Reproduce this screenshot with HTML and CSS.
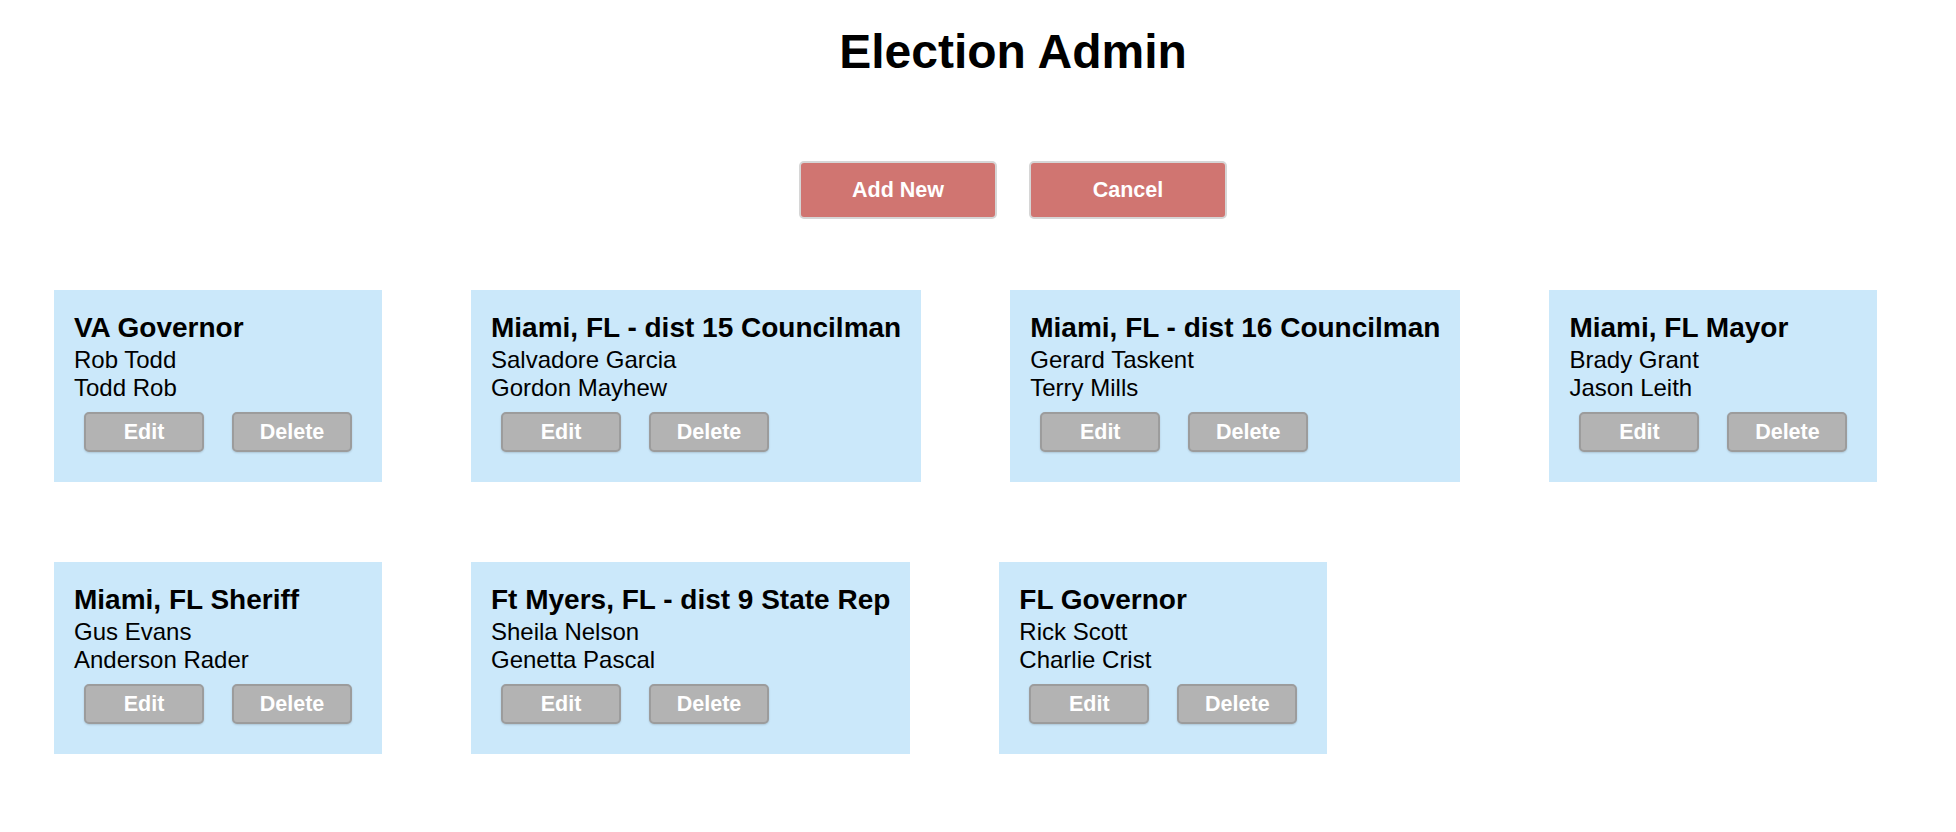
FILE: index.html
```html
<!DOCTYPE html>
<html lang="en">
<head>
<meta charset="utf-8">
<title>Election Admin</title>
<link rel="stylesheet" href="styles.css">
</head>
<body>
  <header class="header">
    <h1 class="title">Election Admin</h1>
    <div class="actions">
      <button class="btn-primary">Add New</button>
      <button class="btn-primary">Cancel</button>
    </div>
  </header>
  <main class="cards">
    <div class="card">
      <h3 class="card-title">VA Governor</h3>
      <div class="candidate">Rob Todd</div>
      <div class="candidate">Todd Rob</div>
      <div class="card-actions"><button class="btn-small">Edit</button><button class="btn-small">Delete</button></div>
    </div>
    <div class="card">
      <h3 class="card-title">Miami, FL - dist 15 Councilman</h3>
      <div class="candidate">Salvadore Garcia</div>
      <div class="candidate">Gordon Mayhew</div>
      <div class="card-actions"><button class="btn-small">Edit</button><button class="btn-small">Delete</button></div>
    </div>
    <div class="card">
      <h3 class="card-title">Miami, FL - dist 16 Councilman</h3>
      <div class="candidate">Gerard Taskent</div>
      <div class="candidate">Terry Mills</div>
      <div class="card-actions"><button class="btn-small">Edit</button><button class="btn-small">Delete</button></div>
    </div>
    <div class="card">
      <h3 class="card-title">Miami, FL Mayor</h3>
      <div class="candidate">Brady Grant</div>
      <div class="candidate">Jason Leith</div>
      <div class="card-actions"><button class="btn-small">Edit</button><button class="btn-small">Delete</button></div>
    </div>
    <div class="card">
      <h3 class="card-title">Miami, FL Sheriff</h3>
      <div class="candidate">Gus Evans</div>
      <div class="candidate">Anderson Rader</div>
      <div class="card-actions"><button class="btn-small">Edit</button><button class="btn-small">Delete</button></div>
    </div>
    <div class="card">
      <h3 class="card-title">Ft Myers, FL - dist 9 State Rep</h3>
      <div class="candidate">Sheila Nelson</div>
      <div class="candidate">Genetta Pascal</div>
      <div class="card-actions"><button class="btn-small">Edit</button><button class="btn-small">Delete</button></div>
    </div>
    <div class="card">
      <h3 class="card-title">FL Governor</h3>
      <div class="candidate">Rick Scott</div>
      <div class="candidate">Charlie Crist</div>
      <div class="card-actions"><button class="btn-small">Edit</button><button class="btn-small">Delete</button></div>
    </div>
  </main>
</body>
</html>
```

FILE: styles.css
```css
html, body {
  margin: 0;
  padding: 0;
  background: #ffffff;
  font-family: "Liberation Sans", Arial, Helvetica, sans-serif;
  color: #000;
}

.header {
  padding: 0 0 0 70px;
  display: flex;
  flex-direction: column;
  align-items: center;
}

.title {
  margin: 24px 0 0;
  font-size: 48px;
  font-weight: bold;
  line-height: 55px;
}

.actions {
  margin-top: 82px;
  display: flex;
  gap: 32px;
}

.btn-primary {
  width: 198px;
  height: 58px;
  background: #d07571;
  color: #fff;
  border: 2px solid #d6d6d6;
  border-radius: 5px;
  font-family: "Liberation Sans", Arial, sans-serif;
  font-weight: bold;
  font-size: 21.5px;
  padding: 0;
}

.cards {
  margin-top: 71px;
  padding: 0 40px 0 54px;
  display: flex;
  flex-wrap: wrap;
  column-gap: 89px;
  row-gap: 80px;
  align-items: flex-start;
}

.card {
  background: #cbe8fa;
  min-width: 288px;
  padding: 22px 20px 20px;
}

.card-title {
  margin: 0 0 2px;
  font-size: 28px;
  font-weight: bold;
  line-height: 32px;
  white-space: nowrap;
}

.candidate {
  font-size: 24px;
  line-height: 28px;
}

.card-actions {
  display: flex;
  gap: 28px;
  margin: 10px 0 10px 10px;
}

.btn-small {
  width: 120px;
  height: 40px;
  background: #b3b3b3;
  color: #fff;
  border: 2px solid #9c9c9c;
  border-radius: 5px;
  font-family: "Liberation Sans", Arial, sans-serif;
  font-weight: bold;
  font-size: 21.5px;
  padding: 0;
  box-shadow: 0 1px 2px rgba(0,0,0,0.15);
}
```
